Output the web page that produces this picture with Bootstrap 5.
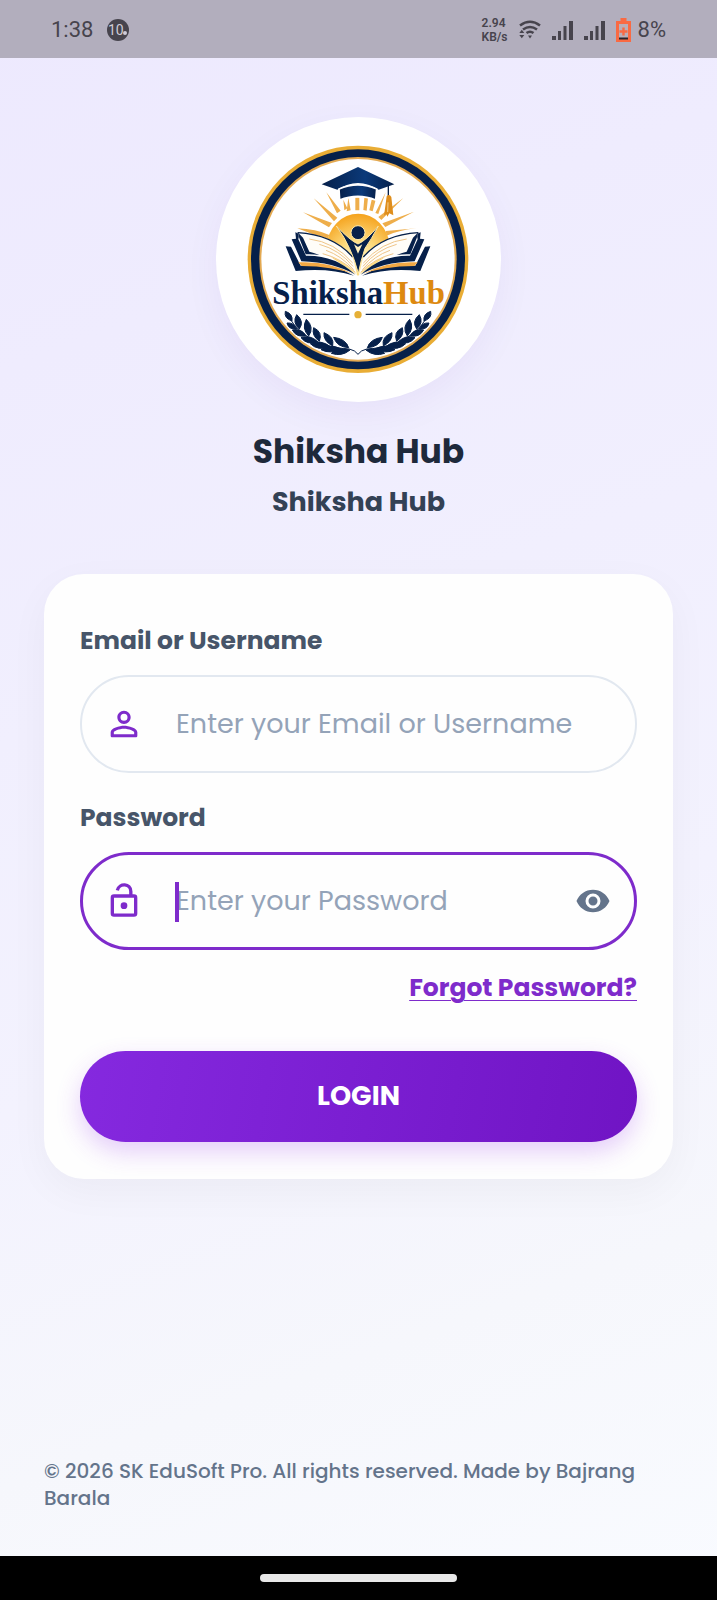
<!DOCTYPE html>
<html lang="en">
<head>
<meta charset="utf-8">
<meta name="viewport" content="width=device-width, initial-scale=1">
<title>Shiksha Hub</title>
<link href="https://cdn.jsdelivr.net/npm/bootstrap@5.3.0/dist/css/bootstrap.min.css" rel="stylesheet">
<style>
body{font-family:Poppins,Inter,sans-serif;background:linear-gradient(160deg,#ede9fe 0%,#f3f2fe 60%,#f6f7fc 80%,#f9fbff 100%);color:#1e293b}
.status-bar{height:58px;padding:2px 51px 0;background:#b2aebd;color:#47444d;font-family:Roboto,sans-serif;font-size:22px;line-height:26px}
.status-bar svg{display:block}
.clock-group{gap:14px}
.signal-group{gap:11px}
.net-speed{font-size:12px;line-height:14px;font-weight:600}
.battery-text{margin-left:-4px}
.screen{padding:0 44px}
.logo-disc{width:285px;height:285px;margin-top:59px;box-shadow:0 12px 36px rgba(76,29,149,.05)}
.app-title{font-size:33px;line-height:44px;font-weight:700;margin:28px 0 0}
.app-subtitle{font-size:27px;line-height:36px;font-weight:700;margin:10px 0 0;color:#334155}
.login-card{border:0;border-radius:40px;padding:51px 36px 37px;margin-top:54px;box-shadow:0 12px 40px rgba(0,0,0,.04);background:#fefefe}
.field-label{font-size:25px;line-height:32px;font-weight:700;color:#475569;margin-bottom:18px}
.field-box{height:98px;border:2px solid #e2e8f0;border-radius:49px;padding:0 24px 0 22px;background:#fefefe}
.field-box + .field-label{margin-top:29px}
.field-box.is-active{border:3px solid #7e2bcb;padding:0 23px 0 21px}
.field-box input{font-size:27px;line-height:36px;padding:0;margin-left:32px;border:0;background:none;color:#1e293b;min-width:0}
.field-box input:focus{box-shadow:none;background:none}
.field-box input::placeholder{color:#94a3b8;opacity:1}
.caret{top:27px;left:92px;width:4px;height:40px;background:#7e2bcb}
.forgot{font-size:25px;line-height:32px;font-weight:700;color:#7e2bcb;margin-top:22px;text-decoration-thickness:1px;text-underline-offset:4px}
.login-btn{height:91px;border:0;border-radius:46px;margin-top:47px;font-size:27px;font-weight:700;color:#fff;background:linear-gradient(100deg,#8529df,#7014c4);box-shadow:0 10px 24px rgba(147,51,234,.24)}
.login-btn:hover{color:#fff}
.copyright{font-size:20px;line-height:27px;font-weight:500;color:#64748b;padding:0 44px;margin-bottom:44px}
.nav-strip{height:44px;background:#000}
.home-pill{width:197px;height:8px;background:#e8e8e8}
</style>
</head>
<body class="d-flex flex-column min-vh-100">
<header class="status-bar d-flex align-items-center justify-content-between">
  <div class="clock-group d-flex align-items-center">
    <span>1:38</span>
    <svg width="22" height="22" viewBox="0 0 22 22"><circle cx="11" cy="11" r="11" fill="#47444d"/><text x="1" y="16" font-family="Roboto" font-size="14" fill="#cfccd8">10</text><circle cx="18" cy="14" r="2" fill="#cfccd8"/></svg>
  </div>
  <div class="signal-group d-flex align-items-center">
    <div class="net-speed">2.94<br>KB/s</div>
    <svg width="22" height="20" viewBox="0 0 22 20" fill="none" stroke="#47444d" stroke-width="2.6"><path d="M1 5.500Q11-2 21 5.500M4 9.500Q11 4.500 18 9.500M7.500 13Q11 10.500 14.500 13"/><path d="M9 15.500h4L11 18.500zM.3 13h5L2.800 9.800zM.3 15h5L2.800 18.200z" fill="#47444d" stroke="none"/></svg>
    <svg width="21" height="19" viewBox="0 0 21 19" fill="#47444d"><path d="M0 15h4v4H0zM6 10h3v9H6zM11.500 5h3v14h-3zM17 0h4v19h-4z"/></svg>
    <svg width="21" height="19" viewBox="0 0 21 19" fill="#47444d"><path d="M0 15h4v4H0zM6 10h3v9H6zM11.500 5h3v14h-3zM17 0h4v19h-4z"/></svg>
    <svg width="15" height="24" viewBox="0 0 15 24"><path d="M4.500 0h6v3H15v21H0V3h4.500z" fill="#f96a43"/><path d="M3 6h9v15H3z" fill="#b9afb9"/><path d="M6.300 9.500h2.400v2.800h2.800v2.400H8.700v2.800H6.300v-2.800H3.500v-2.400h2.800z" fill="#f96a43"/><path d="M3 19.500h9v2H3z" fill="#292329"/></svg>
    <span class="battery-text">8%</span>
  </div>
</header>

<main class="screen d-flex flex-column">
  <div class="logo-disc rounded-circle bg-white align-self-center">
    <svg width="285" height="285" viewBox="20 20 855 855" role="img" aria-label="ShikshaHub logo">
      <defs>
        <radialGradient id="sun" cx=".5" cy=".7" r=".7"><stop offset="0" stop-color="#fff4c4"/><stop offset=".4" stop-color="#fddc80"/><stop offset="1" stop-color="#f5a21c"/></radialGradient>
        <linearGradient id="cap"><stop offset="0" stop-color="#06204a"/><stop offset=".6" stop-color="#0b3a7a"/><stop offset="1" stop-color="#06204a"/></linearGradient>
        <g id="branch" fill="#06204a" stroke="#06204a" stroke-width="3" stroke-linejoin="round">
          <path d="M236 612C258 665 325 712 420 716Q438 720 446 732" fill="none"/>
          <path d="M248 632Q223 624 228 603Q251 610 248 632ZM270 656Q248 637 262 613Q286 633 270 656ZM298 677Q276 654 291 627Q316 651 298 677ZM330 693Q306 676 313 652Q341 665 330 693ZM370 707Q341 692 344 667Q376 679 370 707ZM418 712Q382 710 373 681Q409 685 418 712Z"/>
          <path d="M262 656Q237 658 233 638Q254 636 262 656ZM290 676Q262 683 249 659Q276 653 290 676ZM325 694Q294 706 275 682Q302 672 325 694ZM363 709Q326 723 303 700Q336 687 363 709ZM394 715Q364 733 335 718Q362 699 394 715ZM422 719Q397 740 366 729Q390 708 422 719Z"/>
        </g>
        <g id="bookside">
          <path d="M229 408L245 409L274 466Q365 457 434 496Q359 472 259 482Z" fill="#06204a"/>
          <path d="M267 456Q360 451 431 491Q370 468 277 467Z" fill="#f2a844"/>
          <path d="M258 366L270 371L267 387L290 436Q378 434 438 493Q374 456 276 453L247 387L260 385Z" fill="#06204a"/>
          <path d="M265 366Q371 373 430 440L444 496Q393 430 289 428L270 384Z" fill="#fffdf8"/>
          <path d="M265 366L270 384L289 432Q310 431 330 434Q312 426 300 424L281 382Z" fill="#06204a"/>
          <path d="M265 367Q371 373 430 440" fill="none" stroke="#06204a" stroke-width="4"/>
          <path d="M300 386Q376 395 430 458M330 402Q390 418 431 468M350 420Q396 436 433 478M340 430Q396 444 438 486" fill="none" stroke="#efc589" stroke-width="3"/>
        </g>
      </defs>
      <ellipse cx="446" cy="447" rx="331" ry="341" fill="#e9ad35"/>
      <ellipse cx="446" cy="447" rx="321" ry="330" fill="#06204a"/>
      <ellipse cx="446" cy="447" rx="296" ry="307" fill="#e3a951"/>
      <ellipse cx="446" cy="447" rx="290" ry="301" fill="#fff"/>
      <path d="M264 354Q320 356 360 374L354 388ZM281 306L368 338L359 351ZM313 264L384 322L374 333ZM351 246L394 301L383 309ZM402 268L414 294L405 300ZM417 262L424 300L412 303ZM438 262H450V300H438ZM465 262H476L472 301L462 299ZM487 268H499L490 303L480 300ZM529 246L507 311L498 308ZM582 263L516 329L507 320ZM614 304L528 350L519 339ZM622 354Q570 359 532 376L529 362Z" fill="#eeae4b"/>
      <path d="M351 407A96 108 0 0 1 542 407L535 435L446 496L357 435Z" fill="url(#sun)"/>
      <path d="M337 222L446 170L555 222L508 238Q446 198 384 238Z" fill="url(#cap)"/>
      <path d="M389 236Q446 211 502 236L499 269Q446 247 391 269Z" fill="url(#cap)" stroke="#fff" stroke-width="5"/>
      <path d="M537 224V262" stroke="#06204a" stroke-width="4"/>
      <path d="M532 258Q540 249 546 260L552 315L540 309L534 319L531 311L524 316Z" fill="#df8e1c"/><path d="M536 276L535 305" stroke="#fff0cb" stroke-width="2"/>
      <use href="#bookside"/><use href="#bookside" transform="translate(892 0) scale(-1 1)"/>
      <circle cx="446" cy="367" r="21" fill="#06204a" stroke="#ffe9a9" stroke-width="3"/>
      <path d="M381 347Q424 392 446 401Q470 391 507 347Q485 389 467 414Q455 448 447 489Q435 444 421 415Q407 382 381 347Z" fill="#06204a" stroke="#ffe5a0" stroke-width="3"/>
      <path d="M434 402L446 410L459 402L446 430Z" fill="#fff0be"/>
      <text x="189" y="580" font-family="'Liberation Serif',serif" font-weight="700" font-size="98" fill="#06204a">Shiksha<tspan fill="#dd8910">Hub</tspan></text>
      <path d="M282 612H420M469 612H609" stroke="#06204a" stroke-width="4"/>
      <circle cx="446" cy="613" r="11" fill="#e6b037"/>
      <use href="#branch"/><use href="#branch" transform="translate(892 0) scale(-1 1)"/>
    </svg>
  </div>
  <h1 class="app-title text-center">Shiksha Hub</h1>
  <h2 class="app-subtitle text-center">Shiksha Hub</h2>

  <form class="login-card card" onsubmit="return false">
    <label class="field-label" for="user">Email or Username</label>
    <div class="field-box d-flex align-items-center">
      <svg class="flex-shrink-0" width="40" height="40" viewBox="0 0 24 24" fill="#7e2bcb"><path d="M12 5.900a2.100 2.100 0 1 1 0 4.200 2.100 2.100 0 0 1 0-4.200m0 9c2.970 0 6.100 1.460 6.100 2.100v1.100H5.900V17c0-.64 3.130-2.100 6.100-2.100M12 4C9.790 4 8 5.790 8 8s1.790 4 4 4 4-1.790 4-4-1.790-4-4-4zm0 9c-2.670 0-8 1.340-8 4v2c0 .550.450 1 1 1h14c.550 0 1-.450 1-1v-2c0-2.660-5.330-4-8-4z"/></svg>
      <input class="form-control flex-grow-1" id="user" type="text" placeholder="Enter your Email or Username">
    </div>
    <label class="field-label" for="pass">Password</label>
    <div class="field-box is-active d-flex align-items-center position-relative">
      <svg class="flex-shrink-0" width="40" height="40" viewBox="0 0 24 24" fill="none" stroke="#7e2bcb" stroke-width="2"><rect x="5" y="9" width="14" height="11.500" rx="1"/><path d="M16.100 9V6.300C16.100 1.400 9.200.9 8 5.600"/><circle cx="12" cy="14.800" r="2" fill="#7e2bcb" stroke="none"/></svg>
      <input class="form-control flex-grow-1" id="pass" type="password" placeholder="Enter your Password">
      <span class="caret position-absolute"></span>
      <button class="btn border-0 p-0 flex-shrink-0" type="button" aria-label="Show password"><svg class="d-block" width="36" height="36" viewBox="0 0 24 24" fill="#64748b"><path d="M12 4.500C7 4.500 2.730 7.610 1 12c1.730 4.390 6 7.500 11 7.500s9.270-3.110 11-7.500c-1.730-4.390-6-7.500-11-7.500zM12 17a5 5 0 1 1 0-10 5 5 0 0 1 0 10zm0-8a3 3 0 1 0 0 6 3 3 0 0 0 0-6z"/></svg></button>
    </div>
    <a class="forgot align-self-end" href="#">Forgot Password?</a>
    <button class="login-btn btn w-100" type="submit">LOGIN</button>
  </form>
</main>

<footer class="mt-auto">
  <p class="copyright">© 2026 SK EduSoft Pro. All rights reserved. Made by Bajrang Barala</p>
  <div class="nav-strip d-flex align-items-center justify-content-center"><span class="home-pill rounded-pill"></span></div>
</footer>
<script src="https://cdn.jsdelivr.net/npm/bootstrap@5.3.0/dist/js/bootstrap.bundle.min.js"></script>
</body>
</html>
